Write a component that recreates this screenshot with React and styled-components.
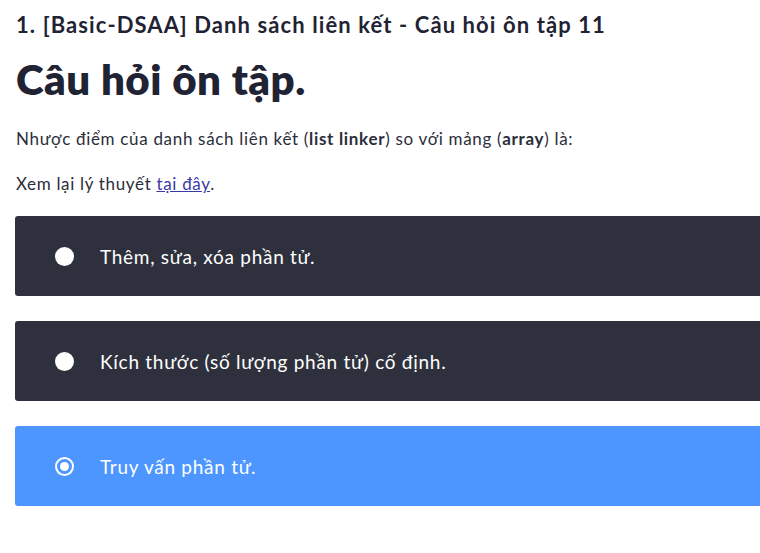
import React from "react";
import styled, { createGlobalStyle } from "styled-components";

const Global = createGlobalStyle`
  html, body { margin: 0; padding: 0; background: #fff; }
  body { font-family: Lato, "Noto Sans", sans-serif; color: #1f2333; overflow: hidden; }
`;

const Page = styled.div`
  padding: 10px 0 0 16px;
  width: 800px;
`;

const Crumb = styled.h3`
  margin: 0;
  font-size: 22px;
  font-weight: 700;
  line-height: 30px;
  letter-spacing: 1.1px;
  color: #1f2333;
`;

const Heading = styled.h1`
  margin: 14px 0 0;
  font-size: 42px;
  font-weight: 800;
  line-height: 50px;
  letter-spacing: 0.5px;
  color: #1f2333;
`;

const Para = styled.p`
  margin: ${(p) => p.$top}px 0 0;
  font-size: 17px;
  line-height: 24px;
  letter-spacing: 0.68px;
  color: #2b2e3a;
  b { font-weight: 700; }
  a { color: #3a3aa6; text-decoration: underline; }
`;

const Options = styled.div`
  margin-top: 20px;
  margin-left: -1px;
  display: flex;
  flex-direction: column;
  gap: 25px;
`;

const Option = styled.div`
  height: 80px;
  display: flex;
  align-items: center;
  padding-left: 40px;
  border-radius: 3px;
  background: ${(p) => (p.$selected ? "#4d96ff" : "#2e313d")};
  color: #fff;
  font-size: 19px;
  letter-spacing: 0.72px;
`;

const Radio = styled.span`
  width: 19px;
  height: 19px;
  box-sizing: border-box;
  border-radius: 50%;
  background: ${(p) => (p.$selected ? "transparent" : "#fff")};
  border: ${(p) => (p.$selected ? "2.5px solid #fff" : "none")};
  display: flex;
  align-items: center;
  justify-content: center;
  margin-right: 26px;
  flex-shrink: 0;
  &::after {
    content: "";
    display: ${(p) => (p.$selected ? "block" : "none")};
    width: 9px;
    height: 9px;
    border-radius: 50%;
    background: #fff;
  }
`;

const options = [
  "Thêm, sửa, xóa phần tử.",
  "Kích thước (số lượng phần tử) cố định.",
  "Truy vấn phần tử.",
];

export default function App() {
  return (
    <Page>
      <Global />
      <Crumb>1. [Basic-DSAA] Danh sách liên kết - Câu hỏi ôn tập 11</Crumb>
      <Heading>Câu hỏi ôn tập.</Heading>
      <Para $top={23}>
        Nhược điểm của danh sách liên kết (<b>list linker</b>) so với mảng (<b>array</b>) là:
      </Para>
      <Para $top={21}>
        Xem lại lý thuyết <a href="#">tại đây</a>.
      </Para>
      <Options>
        {options.map((o, i) => (
          <Option key={i} $selected={i === 2}>
            <Radio $selected={i === 2} />
            {o}
          </Option>
        ))}
      </Options>
    </Page>
  );
}
